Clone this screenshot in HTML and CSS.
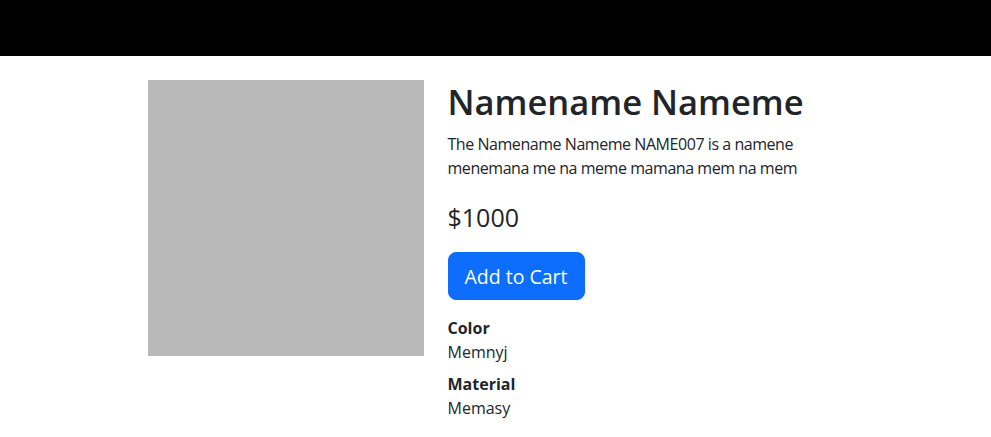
FILE: index.html
```html
<!DOCTYPE html>
<html lang="en">
<head>
<meta charset="utf-8">
<title>Product</title>
<link rel="stylesheet" href="styles.css">
</head>
<body>
<nav class="navbar"></nav>
<main class="container">
  <div class="row">
    <div class="col-image"><div class="placeholder"></div></div>
    <div class="col-info">
      <h1 class="title">Namename Nameme</h1>
      <p class="desc">The Namename Nameme NAME007 is a namene menemana me na meme mamana mem na mem</p>
      <div class="price">$1000</div>
      <button class="btn-cart">Add to Cart</button>
      <dl class="specs">
        <dt>Color</dt>
        <dd>Memnyj</dd>
        <dt>Material</dt>
        <dd>Memasy</dd>
      </dl>
    </div>
  </div>
</main>
</body>
</html>
```
FILE: styles.css
```css
* { box-sizing: border-box; }
body {
  margin: 0;
  font-family: "Open Sans", "Noto Sans", sans-serif;
  font-size: 16px;
  line-height: 1.5;
  color: #212529;
  background: #fff;
}
.navbar { height: 56px; background: #000; }
.container {
  width: 720px;
  margin: 0 auto;
  padding: 24px 12px 0;
}
.row { display: flex; margin: 0 -12px; }
.col-image { width: 300px; padding: 0 12px; }
.placeholder { width: 276px; height: 276px; background: #b9b9b9; }
.col-info { width: 420px; padding: 0 12px; }
.title {
  margin: 0 0 8px;
  font-size: 34.5px;
  font-weight: 600;
  line-height: 1.28;
}
.desc { margin: 0 0 16px; letter-spacing: -0.45px; }
.price {
  font-size: 25px;
  line-height: 1.2;
  margin: 0 0 20px;
  padding-top: 6px;
}
.btn-cart {
  font-family: inherit;
  font-size: 19.5px;
  line-height: 1.5;
  padding: 8px 16px;
  color: #fff;
  background: #0d6efd;
  border: 1px solid #0d6efd;
  border-radius: 8px;
  height: 48px;
}
.specs { margin: 16px 0 0; }
.specs dt { font-weight: 700; }
.specs dd { margin: 0 0 8px; }
```
